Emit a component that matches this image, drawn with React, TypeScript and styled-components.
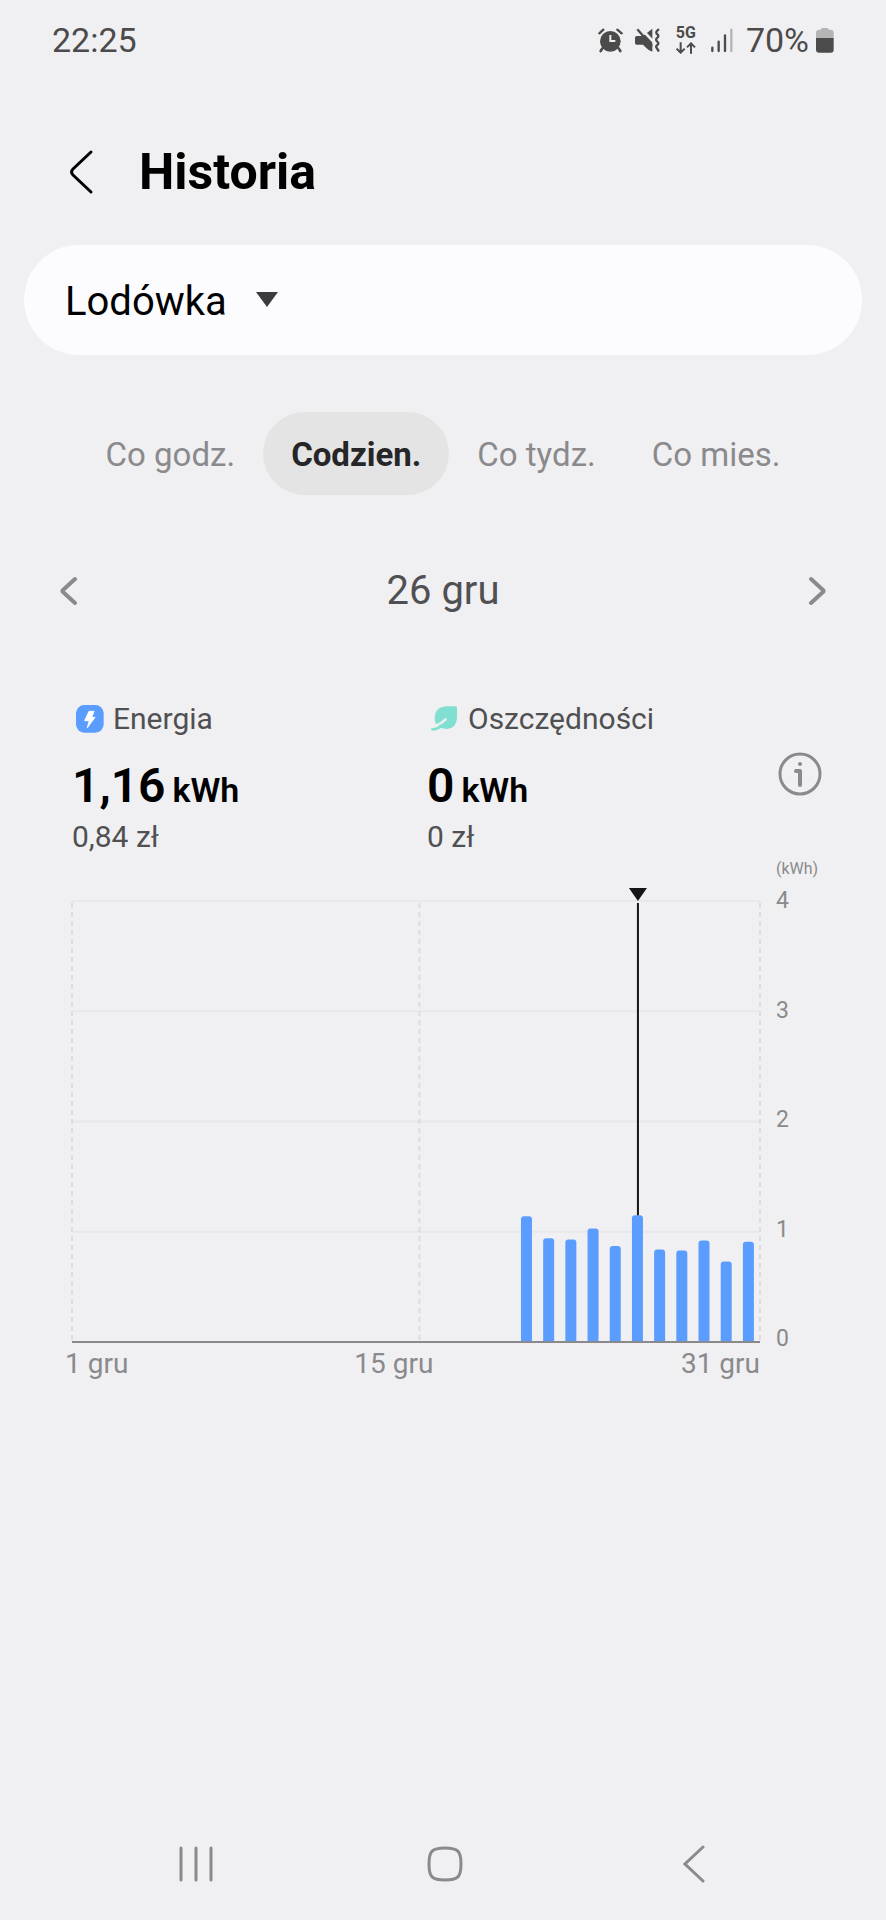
import React, { useState } from 'react';
import styled, { createGlobalStyle } from 'styled-components';

const color = {
  page: '#f0f0f2',
  card: '#fcfcfe',
  pill: '#e4e4e5',
  ink: '#000000',
  strong: '#262628',
  body: '#505052',
  muted: '#8a8a8c',
  status: '#4b4b4b',
  faint: '#b4b4b5',
  grid: '#e8e8ea',
  dash: '#dcdcde',
  energy: '#5a9dff',
  leaf: '#80dfd1',
};

const GlobalStyle = createGlobalStyle`
  * { box-sizing: border-box; }
  body {
    margin: 0;
    background: ${color.page};
    font-family: Roboto, "Liberation Sans", sans-serif;
  }
  button, select {
    margin: 0;
    padding: 0;
    border: 0;
    background: none;
    font: inherit;
    color: inherit;
    cursor: pointer;
  }
  svg { display: block; flex: none; }
`;

const Page = styled.div`
  min-height: 100vh;
  display: flex;
  flex-direction: column;
`;

const StatusBar = styled.div`
  display: flex;
  align-items: center;
  justify-content: space-between;
  height: 80px;
  padding: 0 52px;
  font-size: 34px;
  color: ${color.status};
`;

const StatusIcons = styled.div`
  display: flex;
  align-items: center;
  gap: 12px;
`;

const Network = styled.div`
  display: flex;
  flex-direction: column;
  align-items: center;
  gap: 2px;
  margin: 0 2px 0 4px;
  font-size: 16px;
  line-height: 14px;
  font-weight: 700;
`;

const Charge = styled.div`
  display: flex;
  align-items: center;
  gap: 7px;
`;

const Header = styled.header`
  display: flex;
  align-items: center;
  gap: 45px;
  height: 165px;
  padding: 18px 68px 0;
`;

const Title = styled.h1`
  margin: 0;
  font-size: 50px;
  line-height: 60px;
  font-weight: 700;
  color: ${color.ink};
`;

const DeviceCard = styled.div`
  display: flex;
  align-items: center;
  height: 110px;
  margin: 0 24px;
  padding: 0 41px;
  border-radius: 55px;
  background: ${color.card};
`;

const SelectWrap = styled.div`
  position: relative;
  display: flex;
  align-items: center;
`;

const DeviceSelect = styled.select`
  appearance: none;
  padding: 4px 52px 0 0;
  font-size: 40px;
  line-height: 56px;
  color: ${color.ink};
`;

const SelectArrow = styled.svg`
  position: absolute;
  right: 0;
  pointer-events: none;
`;

const Tabs = styled.div`
  display: flex;
  justify-content: center;
  margin-top: 57px;
`;

const Tab = styled.button<{ $active: boolean }>`
  height: 83px;
  padding: 2px 28px 0;
  border-radius: 42px;
  font-size: 33px;
  white-space: nowrap;
  font-weight: ${(p) => (p.$active ? 700 : 400)};
  color: ${(p) => (p.$active ? color.strong : color.muted)};
  background: ${(p) => (p.$active ? color.pill : 'transparent')};
`;

const DateRow = styled.div`
  display: flex;
  align-items: center;
  justify-content: space-between;
  margin-top: 66px;
  padding: 0 60px;
  font-size: 40px;
  line-height: 60px;
  color: ${color.body};
`;

const Metrics = styled.div`
  display: grid;
  grid-template-columns: calc(50% - 20px) 1fr 44px;
  align-items: center;
  margin-top: 80px;
  padding: 0 64px 0 72px;
`;

const MetricLabel = styled.div`
  display: flex;
  align-items: center;
  gap: 9px;
  padding-left: 4px;
  font-size: 30px;
  line-height: 36px;
  color: ${color.body};
`;

const MetricValue = styled.div`
  display: flex;
  align-items: baseline;
  gap: 7px;
  margin-top: 21px;
  font-size: 48px;
  line-height: 56px;
  font-weight: 600;
  color: ${color.ink};
`;

const Unit = styled.span`
  font-size: 34px;
  line-height: 36px;
`;

const MetricCost = styled.div`
  margin-top: 5px;
  font-size: 30px;
  line-height: 36px;
  color: ${color.body};
`;

const InfoButton = styled.button`
  margin-bottom: 8px;
`;

const Chart = styled.section`
  display: flex;
  gap: 16px;
  padding: 0 64px 0 72px;
`;

const PlotColumn = styled.div`
  flex: 1;
  min-width: 0;
  padding-top: 46px;
`;

const Plot = styled.svg`
  width: 100%;
  height: 446px;
  overflow: visible;
`;

const DayAxis = styled.div`
  display: grid;
  grid-template-columns: 20fr 33fr 47fr;
  margin-left: -7px;
  font-size: 28px;
  line-height: 34px;
  color: ${color.muted};
  text-align: right;

  & > :first-child { text-align: left; }
`;

const ValueAxis = styled.div`
  display: flex;
  flex-direction: column;
  gap: 5px;
  width: 46px;
  color: ${color.muted};
`;

const AxisUnit = styled.div`
  font-size: 16px;
  line-height: 28px;
`;

const AxisTicks = styled.div`
  display: flex;
  flex-direction: column;
  justify-content: space-between;
  height: 464px;
  font-size: 23px;
  line-height: 26px;
`;

const NavBar = styled.nav`
  display: grid;
  grid-template-columns: repeat(3, 1fr);
  height: 112px;
  margin-top: auto;
  padding: 0 68px 0 72px;
`;

const NavButton = styled.button`
  display: flex;
  align-items: center;
  justify-content: center;
`;

const AlarmIcon = () => (
  <svg width="25" height="25" viewBox="0 0 75 75" stroke={color.status} strokeLinecap="round" fill="none">
    <circle cx="37" cy="40" r="31" fill={color.status} stroke="none" />
    <path d="M4 16 16 5M58 5 71 16" strokeWidth="7" />
    <path d="M13 61 8 69M62 61 67 69" strokeWidth="8" />
    <path d="M37 21V39H52" stroke={color.page} strokeWidth="6" strokeLinecap="butt" />
  </svg>
);

const VibrateIcon = () => (
  <svg width="25" height="25" viewBox="0 0 75 75" fill="none">
    <path d="M5 24H24L52 2V71Q42 69 34 60L24 50H5Q0 50 0 45V29Q0 24 5 24Z" fill={color.status} />
    <path d="M13-4 60 46" stroke={color.page} strokeWidth="8" />
    <path d="M7 4 51 54" stroke={color.status} strokeWidth="7" />
    <path
      d="M70 5Q60 13 66 18Q73 23 68 28Q60 34 66 40Q73 45 68 50Q60 56 66 61L70 68"
      stroke={color.status}
      strokeWidth="7"
      strokeLinecap="round"
    />
  </svg>
);

const DataArrows = () => (
  <svg width="20" height="12" viewBox="0 0 60 36" fill="none" stroke={color.status} strokeWidth="6">
    <path d="M14 1V32M2 20 14 32 26 20" />
    <path d="M45 35V4M33 16 45 4 57 16" />
  </svg>
);

const SignalIcon = () => (
  <svg width="24" height="25" viewBox="0 0 72 75" strokeWidth="7" strokeLinecap="round">
    <path d="M7 59V69M26 41V69M45 22V69" stroke={color.status} />
    <path d="M64 5V69" stroke={color.faint} />
  </svg>
);

const BatteryIcon = () => (
  <svg width="18" height="25" viewBox="0 0 54 75">
    <path d="M14 5Q14 0 19 0H33Q38 0 38 5H44Q53 5 53 14V32H0V14Q0 5 9 5Z" fill={color.faint} />
    <path d="M0 30H53V65Q53 74 44 74H9Q0 74 0 65Z" fill={color.status} />
  </svg>
);

const EnergyIcon = () => (
  <svg width="28" height="28" viewBox="0 0 84 84">
    <rect width="83" height="83" rx="25" fill={color.energy} />
    <path
      d="M39 19H54L47 37H57L34 68L40 47H26Z"
      fill="#fff"
      stroke="#fff"
      strokeWidth="3"
      strokeLinejoin="round"
    />
  </svg>
);

const LeafIcon = () => (
  <svg width="28" height="26" viewBox="0 0 84 78" fill="none" strokeLinecap="round">
    <path d="M74 1H46Q12 4 11 36Q11 46 15 54L32 66Q40 69 48 69Q77 66 78 36V5Q78 1 74 1Z" fill={color.leaf} />
    <path d="M44 40Q30 54 12 60" stroke={color.page} strokeWidth="7" />
    <path d="M3 70Q18 71 31 60" stroke={color.leaf} strokeWidth="7" />
  </svg>
);

const InfoIcon = () => (
  <svg width="44" height="44" viewBox="0 0 44 44" fill="none" stroke={color.muted} strokeWidth="3">
    <circle cx="22" cy="22" r="20" />
    <circle cx="22" cy="12" r="2" fill={color.muted} stroke="none" />
    <path d="M18 19H22V33" strokeWidth="4" strokeLinecap="round" strokeLinejoin="round" />
  </svg>
);

const DateChevron = ({ flip = false }: { flip?: boolean }) => (
  <svg width="18" height="30" viewBox="0 0 18 30" fill="none" stroke={color.muted} strokeWidth="4" strokeLinecap="round" strokeLinejoin="round">
    <path d={flip ? 'M3 3 15 14Q16 15 15 16L3 27' : 'M15 3 3 14Q2 15 3 16L15 27'} />
  </svg>
);

const firstDay = 21;
const daysInMonth = 31;
const selectedDay = 26;
const usage = [1.14, 0.94, 0.93, 1.03, 0.87, 1.15, 0.84, 0.83, 0.92, 0.73, 0.91];
const plotHeight = 441;
const perUnit = plotHeight / 4;

const dayCentre = (day: number) => `${((day - 0.5) / daysInMonth) * 100}%`;

function UsagePlot() {
  const selectedTop = plotHeight - usage[selectedDay - firstDay] * perUnit;
  return (
    <Plot role="img" aria-label="Energia, kWh">
      {[0, 1, 2, 3].map((n) => (
        <line key={n} x1="0" x2="100%" y1={n * perUnit} y2={n * perUnit} stroke={color.grid} strokeWidth="2" />
      ))}
      {['0%', '50.5%', '100%'].map((x) => (
        <line key={x} x1={x} x2={x} y1="2" y2={plotHeight} stroke={color.dash} strokeWidth="2" strokeDasharray="5 4" />
      ))}
      {usage.map((value, i) => (
        <svg key={i} x={dayCentre(firstDay + i)} overflow="visible">
          <path
            transform={`translate(-5 ${plotHeight - value * perUnit})`}
            d={`M-1 3Q-1 0 2 0H7Q10 0 10 3V${value * perUnit}H-1Z`}
            fill={color.energy}
          />
        </svg>
      ))}
      <svg x={dayCentre(selectedDay)} overflow="visible">
        <path d="M-9-13H9L0 0Z" fill="#151517" />
        <path d={`M0 2V${selectedTop}`} stroke="#151517" strokeWidth="2" />
      </svg>
      <line x1="0" x2="100%" y1={plotHeight} y2={plotHeight} stroke={color.muted} strokeWidth="2" />
    </Plot>
  );
}

const ranges = ['Co godz.', 'Codzien.', 'Co tydz.', 'Co mies.'];

export default function App() {
  const [range, setRange] = useState('Codzien.');
  return (
    <Page>
      <GlobalStyle />
      <StatusBar>
        <span>22:25</span>
        <StatusIcons>
          <AlarmIcon />
          <VibrateIcon />
          <Network>
            5G
            <DataArrows />
          </Network>
          <SignalIcon />
          <Charge>
            70%
            <BatteryIcon />
          </Charge>
        </StatusIcons>
      </StatusBar>

      <Header>
        <button aria-label="Wstecz">
          <svg width="26" height="46" viewBox="0 0 26 46" fill="none" stroke={color.ink} strokeWidth="3" strokeLinecap="round">
            <path d="M23 3 5 20Q2 23 5 26L23 43" />
          </svg>
        </button>
        <Title>Historia</Title>
      </Header>

      <DeviceCard>
        <SelectWrap>
          <DeviceSelect aria-label="Urządzenie">
            <option>Lodówka</option>
          </DeviceSelect>
          <SelectArrow width="24" height="16" viewBox="0 0 24 16" aria-hidden="true">
            <path d="M1 0H23L12 15Z" fill="#3c3c3e" />
          </SelectArrow>
        </SelectWrap>
      </DeviceCard>

      <Tabs>
        {ranges.map((name) => (
          <Tab key={name} $active={name === range} aria-pressed={name === range} onClick={() => setRange(name)}>
            {name}
          </Tab>
        ))}
      </Tabs>

      <DateRow>
        <button aria-label="Poprzedni dzień">
          <DateChevron />
        </button>
        <span>26 gru</span>
        <button aria-label="Następny dzień">
          <DateChevron flip />
        </button>
      </DateRow>

      <Metrics>
        <div>
          <MetricLabel>
            <EnergyIcon />
            Energia
          </MetricLabel>
          <MetricValue>
            1,16<Unit>kWh</Unit>
          </MetricValue>
          <MetricCost>0,84 zł</MetricCost>
        </div>
        <div>
          <MetricLabel>
            <LeafIcon />
            Oszczędności
          </MetricLabel>
          <MetricValue>
            0<Unit>kWh</Unit>
          </MetricValue>
          <MetricCost>0 zł</MetricCost>
        </div>
        <InfoButton aria-label="Informacje">
          <InfoIcon />
        </InfoButton>
      </Metrics>

      <Chart>
        <PlotColumn>
          <UsagePlot />
          <DayAxis>
            <span>1 gru</span>
            <span>15 gru</span>
            <span>31 gru</span>
          </DayAxis>
        </PlotColumn>
        <ValueAxis>
          <AxisUnit>(kWh)</AxisUnit>
          <AxisTicks>
            {[4, 3, 2, 1, 0].map((n) => (
              <span key={n}>{n}</span>
            ))}
          </AxisTicks>
        </ValueAxis>
      </Chart>

      <NavBar>
        <NavButton aria-label="Ostatnie">
          <svg width="36" height="38" viewBox="0 0 36 38" stroke={color.muted} strokeWidth="3" strokeLinecap="round">
            <path d="M3 3V35M18 3V35M33 3V35" />
          </svg>
        </NavButton>
        <NavButton aria-label="Ekran główny">
          <svg width="38" height="38" viewBox="0 0 38 38" fill="none" stroke={color.muted} strokeWidth="3">
            <path d="M19 3C32 3 35 6 35 19S32 35 19 35S3 32 3 19S6 3 19 3Z" />
          </svg>
        </NavButton>
        <NavButton aria-label="Wstecz">
          <svg width="22" height="38" viewBox="0 0 22 38" fill="none" stroke={color.muted} strokeWidth="3" strokeLinecap="round">
            <path d="M20 2 2 19 20 36" />
          </svg>
        </NavButton>
      </NavBar>
    </Page>
  );
}
